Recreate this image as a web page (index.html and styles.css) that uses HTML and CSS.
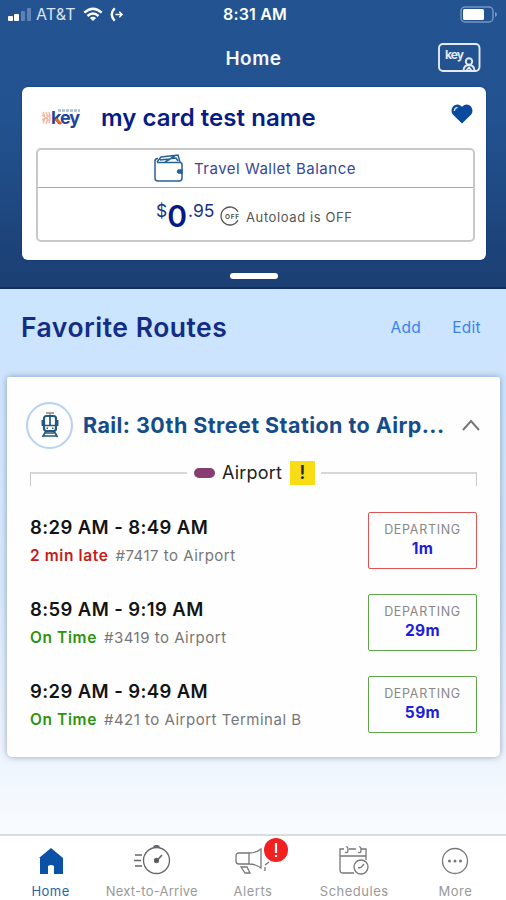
FILE: index.html
```html
<!DOCTYPE html>
<html lang="en">
<head>
  <meta charset="UTF-8">
  <title>Home</title>
  <link rel="stylesheet" href="styles.css">
</head>
<body>

<!-- Header -->
<header class="header">
  <div class="status">
    <div class="carrier">
      <svg class="signal" width="24" height="13" viewBox="0 0 24 13">
        <rect x="0" y="8" width="5" height="5" rx="1" fill="#fff"/>
        <rect x="6" y="6" width="5" height="7" rx="1" fill="#fff"/>
        <rect x="13" y="3" width="4" height="10" rx="1" fill="#5f82b5"/>
        <rect x="19" y="0" width="4" height="13" rx="1" fill="#5f82b5"/>
      </svg>
      <span class="carrier-name">AT&amp;T</span>
      <svg class="wifi" width="20" height="15" viewBox="0 0 20 15" fill="none" stroke="#fff" stroke-width="2.400">
        <path d="M1.300 5.600Q10-2.200 18.700 5.600M4.500 9Q10 4.200 15.500 9"/>
        <path d="M10 14L6.900 11Q10 8.400 13.100 11Z" fill="#fff" stroke="none"/>
      </svg>
      <svg class="call" width="14" height="15" viewBox="0 0 14 15" fill="none" stroke="#fff">
        <path d="M4.700 1.200Q-1.200 7.500 4.700 13.800" stroke-width="2.400"/>
        <path d="M5.500 7.500H12M9.300 4.800L12 7.500L9.300 10.200" stroke-width="1.500"/>
      </svg>
    </div>
    <span class="clock">8:31 AM</span>
    <svg class="battery" width="38" height="17" viewBox="0 0 38 17">
      <rect x="1" y="1" width="32" height="15" rx="4" fill="none" stroke="#7795c2" stroke-width="1.500"/>
      <rect x="3" y="3" width="21" height="11" rx="1.500" fill="#fff"/>
      <path d="M35 6v5q2-.8 2-2.500T35 6z" fill="#7795c2"/>
    </svg>
  </div>

  <div class="title-bar">
    <h1>Home</h1>
    <svg class="key-card" width="43" height="30" viewBox="0 0 43 30" fill="none" stroke="#e4ebf7" stroke-width="1.900">
      <rect x="1" y="1" width="40.500" height="27" rx="4"/>
      <text class="key-mini" x="7" y="16" textLength="19">key</text>
      <circle cx="31" cy="18.500" r="3.200"/>
      <path d="M25.500 27.500Q26 22 31 22T36.500 27.500M28.500 27.500L31 24.500L33.500 27.500"/>
    </svg>
  </div>

  <section class="wallet">
    <div class="wallet-head">
      <svg class="key-logo" width="42" height="22" viewBox="0 0 42 22">
        <g fill="none" stroke="#f5b7a2" stroke-width="1.500">
          <path d="M2 5Q5 11 2 16M5 5Q8 11 5 17M8 5Q10 11 8 16M1 8L9 14M1 13L9 8"/>
        </g>
        <path d="M17 3.500H39" stroke="#a9bdd3" stroke-width="2.500" stroke-dasharray="3 1"/>
        <text class="key-text" x="10" y="17" textLength="29">key</text>
        <path d="M14.500 12L20 17" stroke="#f0642d" stroke-width="2.800"/>
      </svg>
      <h2>my card test name</h2>
      <svg class="heart" width="22" height="20" viewBox="0 0 22 20">
        <path d="M11 19.500L1.800 10.500C-2 5 3.500-1.500 9 1.200L11 2.700L13 1.200C18.500-1.500 24 5 20.200 10.500Z" fill="#094a9e"/>
        <path d="M3.300 7Q3.500 3.800 6.500 3.300" fill="none" stroke="#d9e7f7" stroke-width="1.300"/>
      </svg>
    </div>
    <div class="balance">
      <div class="balance-label">
        <svg width="29" height="28" viewBox="0 0 29 28" fill="none" stroke="#286196" stroke-width="1.500">
          <path d="M3 8.500H26Q28 8.500 28 10.500V24Q28 27 25 27H4Q1 27 1 24V7Q1 4.500 4 4.500"/>
          <path d="M3 8L7 3L24 1L26 8M6 6L22 4L24 7M11 8L21 2"/>
          <path d="M28 16H24.500Q22.500 17.500 24.500 19H28Z" fill="#286196"/>
        </svg>
        <span>Travel Wallet Balance</span>
      </div>
      <div class="balance-value">
        <span class="cents">$</span><span class="dollars">0</span><span class="cents fraction">.95</span>
        <svg class="off" width="20" height="20" viewBox="0 0 20 20">
          <path d="M18 5.800A9 9 0 1 0 18 14.200" fill="none" stroke="#555" stroke-width="1.300"/>
          <text x="5" y="12.700" textLength="14">OFF</text>
        </svg>
        <span class="autoload">Autoload is OFF</span>
      </div>
    </div>
  </section>
  <div class="handle"></div>
</header>

<!-- Favorite routes -->
<main class="routes">
  <div class="routes-head">
    <h2>Favorite Routes</h2>
    <a class="add">Add</a>
    <a class="edit">Edit</a>
  </div>

  <section class="route-card">
    <div class="route-title">
      <div class="route-icon">
        <svg width="18" height="26" viewBox="0 0 18 26" fill="none" stroke="#24577f">
          <path d="M5 1H13M9 1V4" stroke="#888" stroke-width="1.300"/>
          <rect x="3" y="4" width="12" height="15" rx="2.500" stroke-width="2.200"/>
          <path d="M9 5V14M3 13.500H15" stroke-width="1.700"/>
          <path d="M1.300 8V14M16.700 8V14" stroke-width="1.500"/>
          <path d="M5 19L1.500 25M13 19L16.500 25M4 21H14M2 24H16" stroke-width="1.600"/>
          <path d="M5.500 16.300H7M11 16.300H12.500" stroke-width="1.500"/>
        </svg>
      </div>
      <h3>Rail: 30th Street Station to Airp...</h3>
      <svg class="chevron" width="18" height="12" viewBox="0 0 18 12" fill="none" stroke="#777" stroke-width="2">
        <path d="M1 11L9 2L17 11"/>
      </svg>
    </div>

    <div class="line">
      <span class="rule rule-left"></span>
      <span class="pill"></span>
      <span class="line-name">Airport</span>
      <span class="warn">!</span>
      <span class="rule rule-right"></span>
    </div>

    <div class="trip">
      <div>
        <div class="times">8:29 AM - 8:49 AM</div>
        <div class="info"><b class="late">2 min late</b><span>#7417 to Airport</span></div>
      </div>
      <div class="departing departing-late"><span>DEPARTING</span><b>1m</b></div>
    </div>
    <div class="trip">
      <div>
        <div class="times">8:59 AM - 9:19 AM</div>
        <div class="info"><b>On Time</b><span>#3419 to Airport</span></div>
      </div>
      <div class="departing"><span>DEPARTING</span><b>29m</b></div>
    </div>
    <div class="trip">
      <div>
        <div class="times">9:29 AM - 9:49 AM</div>
        <div class="info"><b>On Time</b><span>#421 to Airport Terminal B</span></div>
      </div>
      <div class="departing"><span>DEPARTING</span><b>59m</b></div>
    </div>
  </section>
</main>

<!-- Bottom tabs -->
<nav class="tabs">
  <a class="tab active">
    <svg width="26" height="28" viewBox="0 0 26 28">
      <path d="M13 1L25 11V27H16V19Q13 17 10 19V27H2V11H1Z" fill="#0b51a5"/>
    </svg>
    <span>Home</span>
  </a>
  <a class="tab">
    <svg width="38" height="30" viewBox="0 0 38 30" fill="none" stroke="#666" stroke-width="1.300">
      <circle cx="23.500" cy="15.500" r="13"/>
      <path d="M20.500 1.500H26.500M22 0H25" stroke-width="2"/>
      <path d="M24 15.500L29 10" stroke-width="1.700"/>
      <circle cx="23.500" cy="15.500" r="2" fill="#555"/>
      <path d="M2 10H9M1 15.500H8M2 21H9"/>
    </svg>
    <span class="tight">Next-to-Arrive</span>
  </a>
  <a class="tab">
    <svg width="36" height="28" viewBox="0 0 36 28" fill="none" stroke="#777" stroke-width="1.300">
      <path d="M14 6H4Q1 6 1 9V14Q1 17 4 17H14M14 6V17M14 6Q21 6 26 2V21Q21 17 14 17"/>
      <path d="M6 20H12L15 26H10ZM30 18L34 15M30 20V24"/>
    </svg>
    <i class="badge"><svg width="24" height="24" viewBox="0 0 24 24"><path d="M12 5V15M12 17V19" stroke="#fff" stroke-width="2.200"/></svg></i>
    <span>Alerts</span>
  </a>
  <a class="tab">
    <svg width="30" height="29" viewBox="0 0 30 29" fill="none" stroke="#777" stroke-width="1.300">
      <path d="M15 27H4Q1 27 1 24V3H5M10 3H17M22 3H27V14M1 10H27"/>
      <path d="M6 6Q9 8 9 4T7 1M19 6Q22 8 22 4T20 1"/>
      <circle cx="22" cy="21" r="7" />
      <path d="M19 22L22 21.500L25 18"/>
    </svg>
    <span>Schedules</span>
  </a>
  <a class="tab">
    <svg width="28" height="28" viewBox="0 0 28 28">
      <circle cx="14" cy="14" r="12.500" fill="none" stroke="#777" stroke-width="1.300"/>
      <g fill="#777"><circle cx="8.500" cy="14" r="1.500"/><circle cx="14" cy="14" r="1.500"/><circle cx="19.500" cy="14" r="1.500"/></g>
    </svg>
    <span>More</span>
  </a>
</nav>

</body>
</html>
```
FILE: styles.css
```css
* {
  box-sizing: border-box;
}
body {
  margin: 0;
  height: 900px;
  display: flex;
  flex-direction: column;
  font-family: Inter, "Liberation Sans", sans-serif;
  background: #fff;
  overflow: hidden;
}
h1, h2, h3 {
  margin: 0;
  white-space: nowrap;
}
svg {
  display: block;
  flex: none;
}

/* Header */
.header {
  height: 289px;
  flex: none;
  background: linear-gradient(#235390 0%, #225390 40%, #1b3f73 100%);
  border-bottom: 2px solid #102f69;
}
.status {
  height: 30px;
  display: grid;
  grid-template-columns: 1fr auto 1fr;
  align-items: center;
  padding: 0 8px 2px 8px;
  color: #fff;
}
.carrier {
  display: flex;
  align-items: center;
}
.carrier-name {
  margin-left: 4px;
  width: 47px;
  font-size: 16px;
  letter-spacing: 0.1px;
  color: #d8e3f3;
}
.call {
  margin-left: 7px;
}
.clock {
  font-size: 16px;
  font-weight: 600;
  letter-spacing: 0.2px;
  padding-left: 4px;
}
.battery {
  justify-self: end;
}
.title-bar {
  height: 57px;
  display: grid;
  grid-template-columns: 1fr auto 1fr;
  align-items: center;
  padding-right: 25px;
}
.title-bar h1 {
  grid-column: 2;
  color: #f4f7ff;
  font-size: 19px;
  font-weight: 600;
  letter-spacing: 0.5px;
  padding-left: 26px;
}
.key-card {
  justify-self: end;
  margin-top: -2px;
}
.key-mini {
  font-size: 12px;
  font-weight: 700;
  fill: #e4ebf7;
  stroke: none;
}
.wallet {
  margin: 0 20px 0 22px;
  height: 173px;
  padding: 0 11px 0 14px;
  background: #fff;
  border-radius: 6px;
  box-shadow: 0 0 2px #062f7a;
}
.wallet-head {
  height: 61px;
  display: flex;
  align-items: center;
}
.wallet-head h2 {
  margin-left: 18px;
  flex: 1;
  font-size: 24px;
  font-weight: 600;
  letter-spacing: 0.05px;
  color: #071c84;
}
.key-logo {
  margin-left: 5px;
}
.key-text {
  font-size: 18px;
  font-weight: 700;
  fill: #1d469a;
}
.heart {
  margin: -8px 2px 0 0;
}
.balance {
  height: 94px;
  border: 2px solid #c8c8c8;
  border-radius: 5px;
}
.balance-label {
  height: 38px;
  border-bottom: 1px solid #aaa;
  display: flex;
  align-items: center;
  padding-left: 116px;
  color: #34489a;
  font-size: 15px;
  letter-spacing: 0.5px;
}
.balance-label svg {
  margin-top: -2px;
}
.balance-label span {
  margin-left: 11px;
  margin-top: -1px;
  white-space: nowrap;
}
.balance-value {
  height: 52px;
  display: flex;
  align-items: center;
  padding-left: 118px;
  color: #183384;
}
.cents {
  font-size: 17.5px;
  margin-top: -7px;
}
.dollars {
  font-size: 30px;
  font-weight: 600;
  margin-left: 0;
  margin-top: 4px;
  color: #061a84;
}
.fraction {
  margin-left: 1px;
  width: 26px;
}
.off {
  margin-left: 6px;
  margin-top: 3px;
}
.off text {
  font-size: 6.5px;
  font-weight: 700;
  fill: #555;
}
.autoload {
  margin-left: 6px;
  margin-top: 5px;
  font-size: 13px;
  letter-spacing: 0.6px;
  color: #555;
  white-space: nowrap;
}
.handle {
  width: 48px;
  height: 6px;
  margin: 13px auto 0;
  border-radius: 3px;
  background: #fff;
  position: relative;
  left: 1px;
}

/* Favorite routes */
.routes {
  flex: 1;
  padding: 0 6px 0 7px;
  background: linear-gradient(#cae4ff 0, #cfe4fe 18%, #d8e8fa 55%, #ecf3fd 83%, #f9fcff 100%);
}
.routes-head {
  height: 88px;
  display: flex;
  align-items: center;
  padding: 0 19px 11px 14px;
  color: #3b82ef;
  font-size: 15.5px;
  letter-spacing: 0.3px;
}
.routes-head h2 {
  flex: 1;
  font-size: 26.5px;
  font-weight: 600;
  letter-spacing: 0.5px;
  color: #132d86;
  margin-top: -2px;
}
.edit {
  margin-left: 31px;
}
.route-card {
  height: 380px;
  padding: 24px 23px 0 23px;
  background: #fefefe;
  border-radius: 2px 2px 5px 5px;
  box-shadow: 0 0 6px rgba(60, 85, 120, 0.5);
}
.route-title {
  display: flex;
  align-items: center;
  margin-left: -4px;
  height: 48px;
}
.route-icon {
  width: 47px;
  height: 47px;
  display: flex;
  align-items: center;
  justify-content: center;
  border: 2px solid #b5d1f3;
  border-radius: 50%;
}
.route-title h3 {
  margin-left: 10px;
  flex: 1;
  font-size: 21.5px;
  font-weight: 700;
  letter-spacing: 0.43px;
  color: #164c89;
}
.chevron {
  margin-right: -3px;
}
.line {
  height: 47px;
  display: flex;
  align-items: center;
  font-size: 18px;
  letter-spacing: 0.2px;
  color: #222;
}
.rule {
  height: 14px;
  border-top: 2px solid #d7d7d7;
  margin-top: 12px;
}
.rule-left {
  width: 157px;
  border-left: 1px solid #c8c8c8;
}
.rule-right {
  flex: 1;
  margin-left: 6px;
  border-right: 1px solid #c8c8c8;
}
.pill {
  width: 21px;
  height: 10px;
  margin-left: 7px;
  border-radius: 5px;
  background: #873d71;
}
.line-name {
  margin-left: 7px;
  width: 61px;
}
.warn {
  margin-left: 7px;
  width: 25px;
  height: 24px;
  line-height: 24px;
  text-align: center;
  font-weight: 600;
  background: #f8dc16;
}
.trip {
  height: 82px;
  display: flex;
  justify-content: space-between;
  padding-top: 16px;
}
.times {
  font-size: 18.5px;
  font-weight: 600;
  line-height: 31px;
  letter-spacing: 0.4px;
  color: #141414;
}
.info {
  font-size: 15px;
  line-height: 26px;
  letter-spacing: 0.5px;
  color: #777;
}
.info b {
  font-weight: 600;
  font-size: 15.5px;
  letter-spacing: 0.6px;
  color: #2c940e;
  margin-right: 7px;
}
.info .late {
  color: #c81c19;
}
.departing {
  width: 109px;
  height: 57px;
  padding-top: 8px;
  display: flex;
  flex-direction: column;
  align-items: center;
  border: 1px solid #5fa34b;
  border-radius: 2px;
  font-size: 12.5px;
  letter-spacing: 0.7px;
  color: #888;
}
.departing span {
  line-height: 17px;
}
.departing b {
  font-size: 15.5px;
  line-height: 21px;
  letter-spacing: 0.4px;
  color: #1d1ddd;
}
.departing-late {
  border-color: #dc5555;
}

/* Bottom tabs */
.tabs {
  height: 66px;
  flex: none;
  display: grid;
  grid-template-columns: repeat(5, 1fr);
  border-top: 2px solid #d8dde1;
  background: #fff;
}
.tab {
  position: relative;
  display: flex;
  flex-direction: column;
  align-items: center;
  justify-content: flex-end;
  padding-bottom: 1px;
  font-size: 13px;
  letter-spacing: 0.5px;
  color: #999;
}
.tab span {
  margin-top: 8px;
  line-height: 16px;
}
.tab .tight {
  letter-spacing: 0.25px;
}
.active {
  color: #2665ad;
}
.badge {
  position: absolute;
  left: 62px;
  top: 2px;
  width: 24px;
  height: 24px;
  border-radius: 50%;
  background: #f12121;
}
```
